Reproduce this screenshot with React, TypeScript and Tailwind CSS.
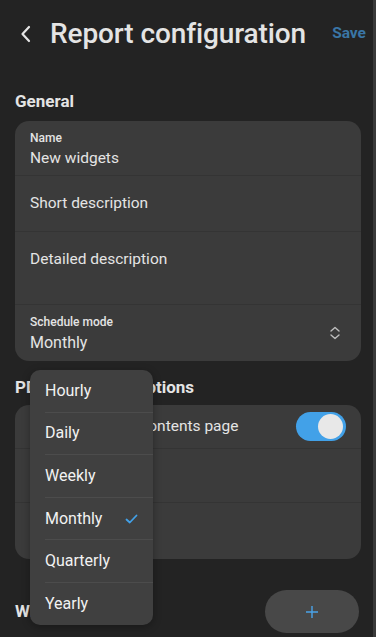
import React from "react";

const font = { fontFamily: "Roboto, 'Noto Sans', sans-serif" };

function Divider() {
  return <div className="h-px bg-[#343434]" />;
}

export default function App() {
  const items = ["Hourly", "Daily", "Weekly", "Monthly", "Quarterly", "Yearly"];
  return (
    <div className="relative flex w-[376px] h-[637px] overflow-hidden bg-[#232323] text-[#e4e4e4]" style={font}>
      <div className="flex w-[373px] flex-col">
        {/* header */}
        <div className="flex h-[66px] items-center pt-[2px]">
          <div className="flex w-[50px] justify-center pl-[2px]">
            <svg width="14" height="18" viewBox="0 0 14 18" fill="none">
              <path d="M10 2 L3.5 9 L10 16" stroke="#e4e4e4" strokeWidth="2.2" strokeLinecap="round" strokeLinejoin="round" />
            </svg>
          </div>
          <div className="text-[28px] font-medium leading-none tracking-[-0.1px]">Report configuration</div>
          <div className="ml-auto mr-[7px] text-[15.5px] font-bold text-[#3a76a6]">Save</div>
        </div>

        <div className="mt-[25px] px-[15px] text-[17px] font-bold leading-[20px]">General</div>
        <div className="ml-[15px] mr-[12px] mt-[10px] overflow-hidden rounded-[14px] bg-[#3b3b3b]">
          <div className="flex h-[54px] flex-col px-[15px] pt-[9px]">
            <div className="text-[12px] leading-[16px] font-medium">Name</div>
            <div className="mt-[2px] text-[15.5px] leading-[20px]">New widgets</div>
          </div>
          <Divider />
          <div className="flex h-[55px] items-center px-[15px] text-[15.5px]">Short description</div>
          <Divider />
          <div className="h-[72px] px-[15px] pt-[17px] text-[15.5px] leading-[20px]">Detailed description</div>
          <Divider />
          <div className="flex h-[56px] items-center px-[15px]">
            <div className="flex flex-1 flex-col">
              <div className="text-[12px] leading-[16px] font-medium">Schedule mode</div>
              <div className="mt-[3px] text-[16px] leading-[20px]">Monthly</div>
            </div>
            <svg width="12" height="14" viewBox="0 0 12 14" fill="none" className="mr-[5px]">
              <path d="M2 5 L6 1.5 L10 5 M2 9 L6 12.5 L10 9" stroke="#bdbdbd" strokeWidth="1.4" strokeLinecap="round" strokeLinejoin="round" />
            </svg>
          </div>
        </div>

        <div className="mt-[16px] px-[15px] text-[17px] font-bold leading-[20px]">PDF generation options</div>
        <div className="ml-[15px] mr-[12px] mt-[8px] overflow-hidden rounded-[14px] bg-[#3b3b3b]">
          <div className="flex h-[43px] items-center px-[15px]">
            <div className="flex-1 text-[15.5px]">Include table of contents page</div>
            <div className="flex h-[29px] w-[50px] items-center justify-end rounded-full bg-[#42a1e8] px-[3px]">
              <div className="h-[25px] w-[25px] rounded-full bg-[#e8e8e8]" />
            </div>
          </div>
          <Divider />
          <div className="h-[53px]" />
          <Divider />
          <div className="h-[56px]" />
        </div>

        <div className="mt-[31px] flex items-center pl-[15px] pr-[14px]">
          <div className="flex-1 text-[17px] font-bold">Widgets</div>
          <div className="flex h-[43px] w-[94px] items-center justify-center rounded-full bg-[#484848]">
            <svg width="14" height="14" viewBox="0 0 14 14">
              <path d="M7 1 V13 M1 7 H13" stroke="#4aa3e8" strokeWidth="1.4" />
            </svg>
          </div>
        </div>
      </div>
      <div className="w-[3px] bg-[#3a3a3a]" />

      {/* dropdown menu */}
      <div className="absolute left-[30px] top-[370px] w-[123px] overflow-hidden rounded-[10px] bg-[#404040] shadow-[0_2px_8px_rgba(0,0,0,0.3)]">
        {items.map((it, i) => (
          <div key={it}>
            {i > 0 && <div className="ml-[15px] h-px bg-[#4c4c4c]" />}
            <div className="flex h-[41.6px] items-center pl-[15px] pr-[15px] text-[16px] text-[#f2f2f2]">
              <span className="flex-1">{it}</span>
              {it === "Monthly" && (
                <svg width="13" height="10" viewBox="0 0 13 10" fill="none">
                  <path d="M1.5 5.5 L4.8 8.5 L11.5 1.5" stroke="#42a1e8" strokeWidth="1.8" strokeLinecap="round" strokeLinejoin="round" />
                </svg>
              )}
            </div>
          </div>
        ))}
      </div>
    </div>
  );
}
